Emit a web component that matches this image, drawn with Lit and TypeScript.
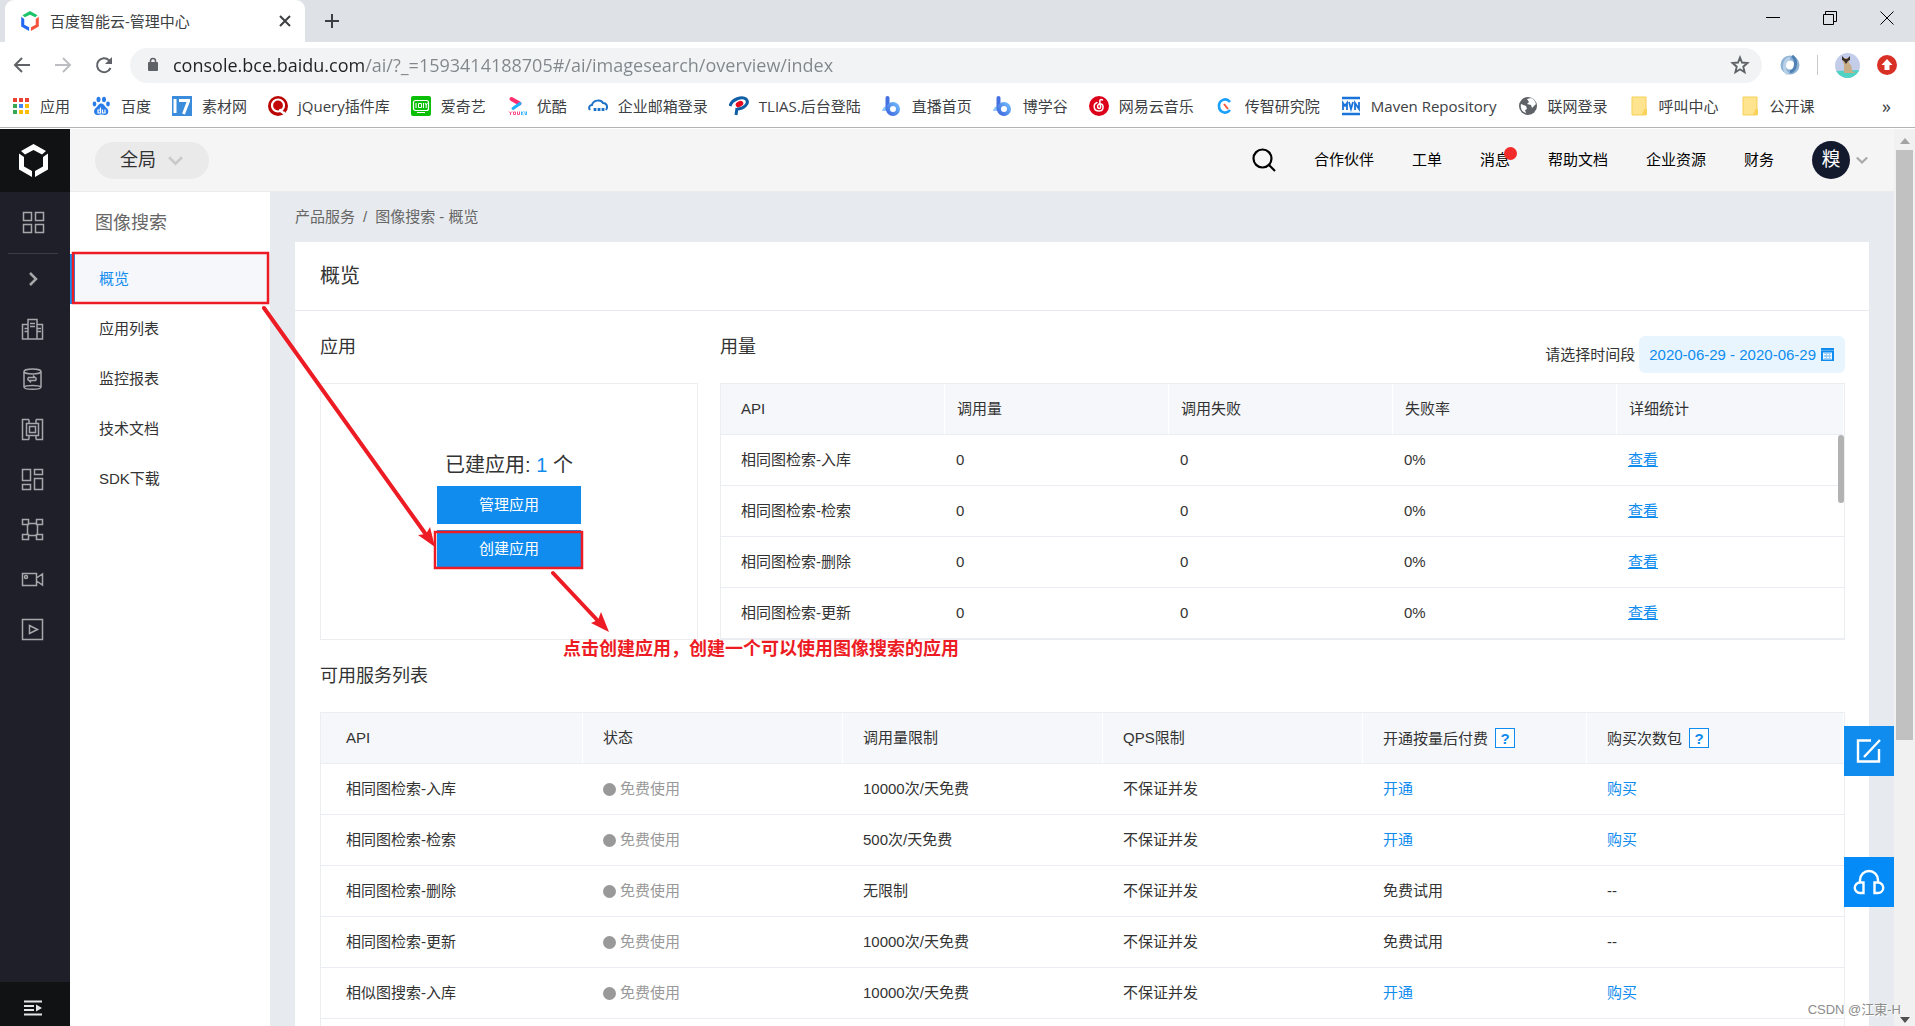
import { LitElement, html, css, svg } from "lit";
import { customElement } from "lit/decorators.js";
import { classMap } from "lit/directives/class-map.js";

const apis = ["相同图检索-入库", "相同图检索-检索", "相同图检索-删除", "相同图检索-更新"];

const services = [
  { api: "相同图检索-入库", limit: "10000次/天免费", pay: "开通", pack: "购买", open: true },
  { api: "相同图检索-检索", limit: "500次/天免费", pay: "开通", pack: "购买", open: true },
  { api: "相同图检索-删除", limit: "无限制", pay: "免费试用", pack: "--", open: false },
  { api: "相同图检索-更新", limit: "10000次/天免费", pay: "免费试用", pack: "--", open: false },
  { api: "相似图搜索-入库", limit: "10000次/天免费", pay: "开通", pack: "购买", open: true },
];

const folder = svg`<path d="M3 1h14v18H3z" fill="#ffe48f" stroke="#f5cf57"/><path d="M15 13h3v6h-5c0-3 2-3 2-6z" fill="#fbd35c"/>`;
const bxg = svg`<defs><linearGradient id="bg" x1="0" y1="1" x2="1" y2="0"><stop offset="0" stop-color="#3f6be0"/><stop offset="1" stop-color="#6db7fb"/></linearGradient></defs><path d="M0 15c1-4 3-5 5-5v5z" fill="#8fc6fc"/><path d="M5.500 2v11" stroke="#4470e2" stroke-width="4" stroke-linecap="round"/><circle cx="11" cy="13" r="5" fill="none" stroke="url(#bg)" stroke-width="4"/>`;

const bookmarks = [
  { text: "应用", icon: svg`${[[3, 2, "#ea4335"], [9, 2, "#ea4335"], [15, 2, "#ea4335"], [3, 8, "#34a853"], [9, 8, "#4285f4"], [15, 8, "#fbbc04"], [3, 14, "#34a853"], [9, 14, "#fbbc04"], [15, 14, "#fbbc04"]].map(([x, y, c]) => svg`<rect x=${x} y=${y} width="4" height="4" fill=${c}/>`)}` },
  { text: "百度", icon: svg`<g fill="#2a7de9"><ellipse cx="7.500" cy="3.500" rx="2" ry="2.800"/><ellipse cx="13" cy="3.500" rx="2" ry="2.800"/><ellipse cx="3.500" cy="8" rx="1.900" ry="2.400"/><ellipse cx="17" cy="8" rx="1.900" ry="2.400"/><path d="M10.200 7.500c3 0 3 2.500 5.500 4.500 3 2.500 1.500 7-1.500 7-1.500 0-2.500-.6-4-.6s-2.500.6-4 .6c-3 0-4.500-4.500-1.500-7 2.500-2 2.500-4.500 5.500-4.500z"/></g><path d="M9.500 11.500v5.500H7v-3h2.500M11.500 13.500V17H14v-3.500" fill="none" stroke="#fff" stroke-width="1.200"/>` },
  { text: "素材网", icon: svg`<rect width="20" height="20" fill="#3b8ddb"/><path d="M3 3v14M7 4.500h11M16.500 5l-5 13" fill="none" stroke="#fff" stroke-width="3"/>` },
  { text: "jQuery插件库", icon: svg`<circle cx="10" cy="10" r="10" fill="#b90504"/><circle cx="10" cy="9.500" r="6" fill="#c20706" stroke="#fff" stroke-width="2.200"/><path d="M12 13c1 3 3 4 5 4" stroke="#fff" stroke-width="2.400" fill="none"/>` },
  { text: "爱奇艺", icon: svg`<rect width="20" height="20" rx="2" fill="#0bbe06"/><rect x="2.500" y="4.500" width="15" height="10" rx="2" fill="none" stroke="#fff" stroke-width="1.200"/><path d="M5 7v5M7.500 7.500h3v4h-3zM12.500 7v5M14 7l1.200 2 1.200-2M15.200 9v3M6 16.500h8" stroke="#fff" fill="none"/>` },
  { text: "优酷", icon: svg`<path d="M4.500 3l8 4.500" stroke="#ff2e6e" stroke-width="4" stroke-linecap="round"/><path d="M13 7.500l-7 5" stroke="#1fb2ff" stroke-width="3" stroke-linecap="round"/><path d="M2 15.500L3.500 17 5 15.500M3.500 17v2M6.500 16h2v2.500h-2zM10.500 15.500v3h2v-3" fill="none" stroke="#ff4c88"/><path d="M14.500 15.500V19m2-3.500l-2 1.700 2 1.700M18 15.500v3h1.500v-3" fill="none" stroke="#35b4ff"/>` },
  { text: "企业邮箱登录", icon: svg`<path d="M2 14c-2-3 0-5 2-5 1-5 9-6 11-2 4 0 5 4 3 7" fill="none" stroke="#1c72c8" stroke-width="2"/><path d="M7 15v-3M11 15v-3M15 15v-3" stroke="#1c72c8" stroke-width="2.800"/>` },
  { text: "TLIAS.后台登陆", icon: svg`<path d="M1 10C3 3 13 0 17 3c4 4-2 10-9 10M8 12l-1 7" fill="none" stroke="#0f5ea6" stroke-width="3"/><ellipse cx="10.500" cy="8" rx="4" ry="2.800" transform="rotate(-25 10.500 8)" fill="#e60c1e"/>` },
  { text: "直播首页", icon: bxg },
  { text: "博学谷", icon: bxg },
  { text: "网易云音乐", icon: svg`<circle cx="10" cy="10" r="10" fill="#dd001b"/><path d="M13.500 4c-2-1-3 0-2.700 2l.8 4.500c.3 2.500-3 2.500-3 0C8.600 8.500 10 7.500 12 8c3 .8 3 7-2 7-6 0-6-7-2-8.500" fill="none" stroke="#fff" stroke-width="1.500" stroke-linecap="round"/>` },
  { text: "传智研究院", icon: svg`<path d="M15 6C11 1 4 4 4 10s7 9 11 4" fill="none" stroke="#18a0fb" stroke-width="2.600"/><path d="M9 8l4 5" stroke="#f2583e" stroke-width="2"/>` },
  { text: "Maven Repository", icon: svg`<path d="M1 2h18M1 18h18" stroke="#1a73d9" stroke-width="2.500"/><path d="M2 14V7l2 3 2-3v7M8 6l2 7 2-7M14 14V7l4 6V6" fill="none" stroke="#1a73d9" stroke-width="1.800"/>` },
  { text: "联网登录", icon: svg`<circle cx="10" cy="10" r="9" fill="#5f6368"/><path d="M3 8l5 2 1 3-2 1 1 3c-4-1-6-5-5-9zM9 3l4-1c3 1 4 3 5 6l-4 4-1-3-4-1 2-2z" fill="#fff"/>` },
  { text: "呼叫中心", icon: folder },
  { text: "公开课", icon: folder },
];

const sideIcons = [
  svg`<path d="M7 21.500V1.500h9v20M7 6.500H1.500v14.500h20V6.500H16M9 5.500h5M9 8.500h5M3.500 10.500H7M3.500 13.500H7M16 10.500h4M16 13.500h4"/>`,
  svg`<ellipse cx="11.500" cy="3.500" rx="8.500" ry="2.500"/><path d="M3 4v15c0 3 17 3 17 0V4M3 19c2-2 15-2 17 0M7 9.500h7l-2-2M15 12.500H8l2 2M7 9.500v3M15 9.500v3"/>`,
  svg`<path d="M8 1.500H1.500v20H8M15 1.500h6.500v20H15M5.500 5.500h12v12h-12zM8.500 8.500h6v6h-6zM8 1.500v4M15 1.500v4M8 17.500v4M15 17.500v4"/>`,
  svg`<path d="M1.500 1.500h8v11h-8zM13.500 1.500h8v5h-8zM1.500 16.500h8v5h-8zM13.500 10.500h8v11h-8z"/>`,
  svg`<path d="M1.500 1.500h6v5h-6zM15.500 1.500h6v5h-6zM1.500 16.500h6v5h-6zM15.500 16.500h6v5h-6zM6.500 6.500v10M16.500 6.500v10M7.500 5.500h8M7.500 17.500h8"/>`,
  svg`<path d="M1.500 5.500h14v12h-14zM15.500 10l6-4v11l-6-4"/><circle cx="5" cy="9" r="1.500"/>`,
  svg`<path d="M1.500 1.500h20v20h-20zM8.500 7.500l8 4-8 4z"/>`,
];

const logo = (a: string, b: string, c: string) => svg`<path fill=${a} d="M14.500 0L27 7l-4 3.500-8.500-4.500L6 10.500 2 7z"/><path fill=${b} d="M0 9.500l5 3.500v9.500l8 4.500v6L0 25.500z"/><path fill=${c} d="M29 9.500L24 13v9.500L16 27v6l13-7.500z"/>`;

@customElement("browser-frame")
class BrowserFrame extends LitElement {
  static styles = css`
    :host { display: block; flex: none; font-family: "Open Sans", "Noto Sans CJK SC", sans-serif; color: #3c4043; font-size: 15px; }
    button { border: 0; background: none; padding: 0; font: inherit; color: inherit; display: grid; place-items: center; flex: none; }
    svg { display: block; flex: none; fill: none; }
    .tabs { height: 42px; background: #dee1e6; display: flex; padding-left: 5px; }
    .tab { width: 300px; box-sizing: border-box; background: #fff; border-radius: 9px 9px 0 0; display: flex; align-items: center; gap: 10px; padding: 0 12px 0 15px; }
    .tab span { flex: 1; }
    .plus { width: 54px; }
    .win { margin-left: auto; display: flex; height: 36px; }
    .win button { width: 57px; }
    .bar { height: 46px; display: flex; align-items: center; padding: 0 18px 0 1px; }
    .nav { width: 41px; }
    .omni { flex: 1; height: 35px; margin-left: 6px; border-radius: 18px; background: #f1f3f4; display: flex; align-items: center; padding: 0 12px 0 17px; gap: 14px; }
    .url { flex: 1; border: 0; outline: 0; padding: 0; height: 30px; font: 18px "Open Sans", sans-serif; color: transparent; background: linear-gradient(90deg, #202124 191px, #80868b 191px); -webkit-background-clip: text; background-clip: text; }
    .ext { display: flex; align-items: center; gap: 17px; padding-left: 18px; }
    .sep { width: 1px; height: 20px; background: #c8cacd; }
    .marks { height: 40px; display: flex; align-items: center; gap: 21px; padding: 0 24px 4px 10px; border-bottom: 1px solid #b1b3b5; margin-bottom: 1px; box-sizing: border-box; white-space: nowrap; }
    .marks a { display: flex; align-items: center; gap: 10px; color: inherit; text-decoration: none; }
    .more { margin-left: auto; font-size: 18px; }
  `;
  render() {
    return html`
      <div class="tabs">
        <div class="tab">
          <svg width="20" height="20" viewBox="0 0 29 33">${logo("#1ec46a", "#2468f2", "#f5523c")}</svg>
          <span>百度智能云-管理中心</span>
          <button aria-label="关闭标签页"><svg width="16" height="16" stroke="#3c4043" stroke-width="2"><path d="M3 3l10 10M13 3L3 13"/></svg></button>
        </div>
        <button class="plus" aria-label="新标签页"><svg width="16" height="16" stroke="#3c4043" stroke-width="2"><path d="M8 1v14M1 8h14"/></svg></button>
        <div class="win">
          <button aria-label="最小化"><svg width="14" height="14" stroke="#000"><path d="M0 6.500h14"/></svg></button>
          <button aria-label="还原"><svg width="14" height="14" stroke="#000"><path d="M.5 3.500h10v10H.5zM2.500 3.500v-3h11v10h-3"/></svg></button>
          <button aria-label="关闭"><svg width="14" height="14" stroke="#000"><path d="M.5.5l13 13M13.500.5l-13 13"/></svg></button>
        </div>
      </div>
      <div class="bar">
        <button class="nav" aria-label="后退"><svg width="18" height="18" stroke="#5f6368" stroke-width="2"><path d="M17 9H2M9 2L2 9l7 7"/></svg></button>
        <button class="nav" aria-label="前进"><svg width="18" height="18" stroke="#bcbec1" stroke-width="2"><path d="M1 9h15M9 2l7 7-7 7"/></svg></button>
        <button class="nav" aria-label="重新加载"><svg width="18" height="18" stroke="#5f6368" stroke-width="2"><path d="M15.500 12A7 7 0 1 1 14 4.200l2 2"/><path d="M17 1v7h-7z" fill="#5f6368" stroke="none"/></svg></button>
        <div class="omni">
          <svg width="12" height="16" viewBox="0 0 12 16"><rect x="1" y="5" width="10" height="9" rx="1" fill="#5f6368"/><path d="M3.500 6V4a2.500 2.500 0 0 1 5 0v2" stroke="#5f6368" stroke-width="1.500"/></svg>
          <input class="url" aria-label="地址" value="console.bce.baidu.com/ai/?_=1593414188705#/ai/imagesearch/overview/index" />
          <button aria-label="收藏"><svg width="20" height="20" stroke="#5f6368" stroke-width="1.900"><path d="M10 2.500l2 5 5.500.5-4.200 3.700 1.300 5.500L10 14.300l-4.600 2.900 1.300-5.500L2.500 8 8 7.500z"/></svg></button>
        </div>
        <div class="ext">
          <svg width="20" height="20"><circle cx="10" cy="10" r="7" fill="#fff" stroke="#8fb3d6" stroke-width="5"/><path d="M12 1c5 3 5 14-2 16" stroke="#4f80b3" stroke-width="3"/><path d="M8 19C3 16 3 5 10 3" stroke="#b9d1e6" stroke-width="3"/></svg>
          <span class="sep"></span>
          <svg width="25" height="25"><defs><clipPath id="av"><circle cx="12.500" cy="12.500" r="12.500"/></clipPath></defs><g clip-path="url(#av)"><path fill="#c3cdea" d="M0 0h25v25H0z"/><path fill="#4fd3c4" d="M0 18l25-1v8H0z"/><path fill="#c8ae88" d="M9 9h4c4 3 4 6 4 9l4 2H9z"/><path fill="#c8ae88" d="M8 5h6v5l-3 2-3-2z"/><path fill="#3b2f2a" d="M7 3l3 3h2l3-3v4l-2 1-2 3-2-3-2-1z"/></g></svg>
          <svg width="20" height="20"><circle cx="10" cy="10" r="10" fill="#d93025"/><path d="M10 4l5.500 6H12.500v5h-5v-5H4.500z" fill="#fff"/></svg>
        </div>
      </div>
      <nav class="marks">
        ${bookmarks.map((b) => html`<a href="#"><svg width="20" height="20" viewBox="0 0 20 20">${b.icon}</svg>${b.text}</a>`)}
        <button class="more" aria-label="更多书签">»</button>
      </nav>`;
  }
}

@customElement("app-root")
class AppRoot extends LitElement {
  static styles = css`
    :host { display: flex; flex-direction: column; height: 100vh; overflow: hidden; position: relative; background: #fff; color: #333; font: 15px/20px "Liberation Sans", "Noto Sans CJK SC", sans-serif; }
    a { color: #108cee; text-decoration: none; }
    button { border: 0; background: none; padding: 0; font: inherit; color: inherit; }
    svg { display: block; fill: none; flex: none; }
    h1, h2 { margin: 0; font-weight: 400; }
    h1 { font-size: 20px; }
    h2 { font-size: 18px; }
    .page { flex: 1; min-height: 0; display: flex; }
    .rail { width: 70px; box-sizing: border-box; flex: none; background: #1e1f29; display: flex; flex-direction: column; align-items: center; }
    .rail button, .rail a { display: grid; place-items: center; height: 50px; width: 65px; align-self: flex-start; stroke: #a6a7ab; }
    .rail .logo { background: #111214; height: 63px; width: 70px; padding-right: 4px; box-sizing: border-box; stroke: none; }
    .rail .all { height: 62px; border-bottom: 1px solid #3b3c48; width: 50px; margin-left: 8px; }
    .rail .fold { margin-top: auto; background: #111214; width: 70px; height: 44px; padding: 7px 4px 0 0; box-sizing: border-box; }
    .console { flex: 1; min-width: 0; display: flex; flex-direction: column; }
    .top { height: 63px; box-sizing: border-box; background: #f5f5f5; border-bottom: 1px solid #ebebeb; display: flex; align-items: center; gap: 38px; padding: 0 26px 0 25px; color: #000; flex: none; }
    .region { display: flex; align-items: center; gap: 12px; height: 37px; padding: 0 26px 0 25px; border-radius: 19px; background: #eaeaea; font-size: 18px; color: #333; margin-right: auto; }
    .top a { color: inherit; position: relative; }
    .dot { position: absolute; width: 13px; height: 13px; border-radius: 50%; background: #f22a2a; right: -7px; top: -3px; }
    .user { display: flex; align-items: center; gap: 6px; }
    .face { width: 38px; height: 38px; border-radius: 50%; background: #141a2e; color: #fff; display: grid; place-items: center; font-size: 19px; }
    .below { flex: 1; min-height: 0; display: flex; }
    .menu { width: 200px; flex: none; background: #fff; }
    .menu h2 { color: #666; line-height: 62px; padding-left: 25px; }
    .menu a { display: block; line-height: 50px; padding-left: 29px; color: #333; }
    .menu a.on { background: #f5f7fb; color: #108cee; border-left: 5px solid #108cee; padding-left: 24px; }
    .main { flex: 1; min-width: 0; background: #e7ebef; padding: 0 25px; overflow: hidden; }
    .crumb { height: 50px; display: flex; align-items: center; gap: 8px; color: #666; }
    .crumb a { color: inherit; }
    .card { background: #fff; }
    .card h1 { height: 68px; display: flex; align-items: center; padding: 0 25px; border-bottom: 1px solid #e7ebef; }
    .body { padding: 0 24px 0 25px; }
    .cols { display: grid; grid-template-columns: 378px minmax(0, 1fr); column-gap: 22px; }
    .head { height: 72px; display: flex; align-items: center; justify-content: space-between; }
    .range { display: flex; align-items: center; gap: 4px; align-self: flex-end; margin-bottom: 10px; }
    .range button { display: flex; align-items: center; gap: 5px; height: 37px; padding: 0 11px 0 10px; border-radius: 6px; background: #e8f5fe; color: #108cee; }
    .box { height: 257px; box-sizing: border-box; border: 1px solid #ebedf0; display: flex; flex-direction: column; align-items: center; justify-content: center; gap: 6px; }
    .count { margin: 0 0 5px; font-size: 20px; }
    .count b { font-weight: 400; color: #108cee; }
    .box button { width: 144px; height: 38px; background: #108cee; color: #fff; }
    table { width: 100%; border-collapse: separate; border-spacing: 0; table-layout: fixed; border: 1px solid #ebedf0; }
    th { font-weight: 400; text-align: left; background: #f5f7fb; border-right: 1px solid #fff; }
    th, td { box-sizing: border-box; height: 51px; border-bottom: 1px solid #ebedf5; }
    .usage { position: relative; }
    .usage th { padding: 0 12px; width: 224px; }
    .usage th:last-child { width: auto; }
    .usage td { padding: 0 11px; }
    .usage th:first-child, .usage td:first-child { padding-left: 20px; }
    .usage td a { text-decoration: underline; }
    .thumb { position: absolute; right: 1px; top: 52px; width: 6px; height: 68px; border-radius: 3px; background: #b2b2b2; }
    .services { border-bottom: 0; }
    .services th, .services td { padding: 0 20px; }
    .services th:first-child, .services td:first-child { padding-left: 25px; }
    .services tr > * { width: 260px; }
    .services tr > :first-child { width: 262px; }
    .services tr > :nth-child(5) { width: 224px; }
    .services tr > :last-child { width: auto; }
    .rest { height: 51px; border: 1px solid #ebedf0; border-top: 0; }
    .q { display: inline-grid; place-items: center; width: 20px; height: 20px; box-sizing: border-box; border: 1px solid #108cee; background: #fff; color: #108cee; font-weight: 700; margin-left: 7px; }
    .state { display: flex; align-items: center; gap: 4px; color: #999; }
    .state i { width: 13px; height: 13px; border-radius: 50%; background: #999; }
    .scroll { width: 21px; flex: none; background: #f1f1f1; display: flex; flex-direction: column; align-items: center; justify-content: space-between; padding: 8px 0 0; box-sizing: border-box; }
    .scroll div { width: 17px; flex: 1; margin: 5px 0 276px; background: #c1c1c1; }
    .scroll svg:last-child { margin-bottom: 2px; }
    .float { position: absolute; right: 21px; top: 726px; display: grid; gap: 81px; }
    .float button { width: 50px; height: 50px; display: grid; place-items: center; background: #108cee; }
    .float .help { background: #058bf7; }
    .marksvg { position: absolute; left: 0; top: 0; pointer-events: none; }
    .note { position: absolute; left: 563px; top: 639px; margin: 0; font-size: 18px; font-weight: 700; color: #ed1c24; white-space: nowrap; }
    .sign { position: absolute; right: 14px; bottom: 6px; margin: 0; font-size: 13px; color: #8c8c8c; text-shadow: 1px 1px 0 #fff; }
  `;
  render() {
    const chev = (c: string, w: number) => html`<svg width=${w} height=${w} viewBox="0 0 14 14" stroke=${c} stroke-width="2.5"><path d="M1 4l6 6 6-6"/></svg>`;
    return html`
      <browser-frame></browser-frame>
      <div class="page">
        <nav class="rail">
          <a class="logo" href="#" aria-label="首页"><svg width="29" height="33">${logo("#fff", "#fff", "#fff")}</svg></a>
          <button class="all" aria-label="全部产品"><svg width="23" height="23" stroke-width="1.500"><path d="M1.500 1.500h8v8h-8zM13.500 1.500h8v8h-8zM1.500 13.500h8v8h-8zM13.500 13.500h8v8h-8z"/></svg></button>
          <button aria-label="展开"><svg width="14" height="16" stroke-width="2.500"><path d="M4 2l6 6-6 6"/></svg></button>
          ${sideIcons.map((i) => html`<a href="#" aria-label="产品"><svg width="23" height="23" stroke-width="1.500">${i}</svg></a>`)}
          <button class="fold" aria-label="菜单"><svg width="18" height="16" stroke="#e4e5e8" stroke-width="2"><path d="M0 1.500h18M0 6h10M0 10h10M0 14.500h18"/><path d="M12 4.500l6 3.500-6 3.500z" fill="#e4e5e8" stroke="none"/></svg></button>
        </nav>
        <div class="console">
          <header class="top">
            <button class="region">全局 ${chev("#c9c9c9", 15)}</button>
            <button aria-label="搜索"><svg width="24" height="24" stroke="#000" stroke-width="2.200"><circle cx="10.500" cy="10.500" r="9"/><path d="M17 17l6 6"/></svg></button>
            <a href="#">合作伙伴</a>
            <a href="#">工单</a>
            <a href="#">消息<span class="dot"></span></a>
            <a href="#">帮助文档</a>
            <a href="#">企业资源</a>
            <a href="#">财务</a>
            <button class="user"><span class="face">糗</span>${chev("#a9a9a9", 12)}</button>
          </header>
          <div class="below">
            <nav class="menu">
              <h2>图像搜索</h2>
              ${["概览", "应用列表", "监控报表", "技术文档", "SDK下载"].map((t, i) => html`<a href="#" class=${classMap({ on: i === 0 })}>${t}</a>`)}
            </nav>
            <main class="main">
              <div class="crumb"><a href="#">产品服务</a><span>/</span><span>图像搜索 - 概览</span></div>
              <section class="card">
                <h1>概览</h1>
                <div class="body">
                  <div class="cols">
                    <div>
                      <div class="head"><h2>应用</h2></div>
                      <div class="box">
                        <p class="count">已建应用: <b>1</b> 个</p>
                        <button>管理应用</button>
                        <button>创建应用</button>
                      </div>
                    </div>
                    <div>
                      <div class="head">
                        <h2>用量</h2>
                        <div class="range">
                          <label for="range">请选择时间段</label>
                          <button id="range">2020-06-29 - 2020-06-29 <svg width="13" height="13"><path d="M0 0h13v2H0z" fill="#108cee"/><path d="M0 2h13v1H0z" fill="#9fd0f8"/><path d="M1 3.500h11v9H1z" stroke="#108cee" stroke-width="2"/><path d="M3 5h7v6H3z" fill="#9fd0f8"/><path d="M3 6.500h7M3 9.500h7" stroke="#fff" stroke-dasharray="2 1"/></svg></button>
                        </div>
                      </div>
                      <div class="usage">
                        <table>
                          <thead><tr><th>API</th><th>调用量</th><th>调用失败</th><th>失败率</th><th>详细统计</th></tr></thead>
                          <tbody>${apis.map((a) => html`<tr><td>${a}</td><td>0</td><td>0</td><td>0%</td><td><a href="#">查看</a></td></tr>`)}</tbody>
                        </table>
                        <span class="thumb"></span>
                      </div>
                    </div>
                  </div>
                  <div class="head"><h2>可用服务列表</h2></div>
                  <table class="services">
                    <thead><tr><th>API</th><th>状态</th><th>调用量限制</th><th>QPS限制</th><th>开通按量后付费<button class="q" aria-label="付费说明">?</button></th><th>购买次数包<button class="q" aria-label="次数包说明">?</button></th></tr></thead>
                    <tbody>${services.map((s) => html`<tr>
                      <td>${s.api}</td>
                      <td><span class="state"><i></i>免费使用</span></td>
                      <td>${s.limit}</td>
                      <td>不保证并发</td>
                      <td>${s.open ? html`<a href="#">${s.pay}</a>` : s.pay}</td>
                      <td>${s.open ? html`<a href="#">${s.pack}</a>` : s.pack}</td>
                    </tr>`)}</tbody>
                  </table>
                  <div class="rest"></div>
                </div>
              </section>
            </main>
          </div>
        </div>
        <div class="scroll">
          <svg width="10" height="8"><path d="M0 7l5-6 5 6z" fill="#a3a3a3"/></svg>
          <div></div>
          <svg width="10" height="8"><path d="M0 1l5 6 5-6z" fill="#505050"/></svg>
        </div>
      </div>
      <div class="float">
        <button aria-label="反馈"><svg width="26" height="26" stroke="#fff" stroke-width="2.400"><path d="M15 2.500H2v21h21V11M8 19L24 2"/></svg></button>
        <button class="help" aria-label="客服"><svg width="32" height="28" stroke="#fff" stroke-width="2.400"><path d="M7 14.500V12a9 9 0 0 1 18 0v2.500M10.500 14.500V25H7a5 5 0 0 1 0-10.500zM21.500 14.500V25H25a5 5 0 0 0 0-10.500z"/></svg></button>
      </div>
      <svg class="marksvg" width="700" height="700" stroke="#ed1c24">
        <rect x="73" y="253" width="195" height="50" stroke-width="2.500"/>
        <rect x="435" y="532" width="147" height="36" stroke-width="2.500"/>
        <path d="M264 308L427 536M553 573L600 623" stroke-width="4" stroke-linecap="round"/>
        <path d="M435 547l-17-12 8-1 4-7zM609 632l-18-9 7-3 3-8z" fill="#ed1c24" stroke="none"/>
      </svg>
      <p class="note">点击创建应用，创建一个可以使用图像搜索的应用</p>
      <p class="sign">CSDN @江東-H</p>`;
  }
}
